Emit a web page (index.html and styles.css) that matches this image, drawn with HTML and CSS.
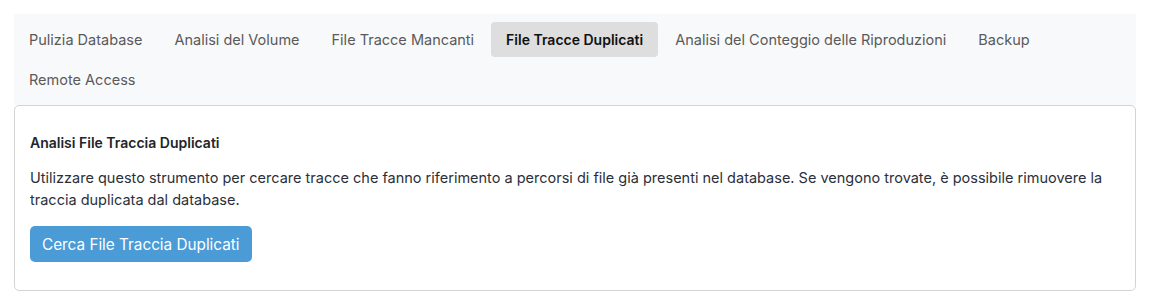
FILE: index.html
```html
<!DOCTYPE html>
<html lang="it">
<head>
    <meta charset="UTF-8">
    <meta name="viewport" content="width=device-width, initial-scale=1.0">
    <title>Strumenti Database</title>
    <link rel="stylesheet" href="styles.css">
</head>
<body>
    <div class="tabs">
        <a class="tab" href="#">Pulizia Database</a>
        <a class="tab" href="#">Analisi del Volume</a>
        <a class="tab" href="#">File Tracce Mancanti</a>
        <a class="tab active" href="#">File Tracce Duplicati</a>
        <a class="tab" href="#">Analisi del Conteggio delle Riproduzioni</a>
        <a class="tab" href="#">Backup</a>
        <a class="tab" href="#">Remote Access</a>
    </div>
    <div class="card">
        <h3 class="card-title">Analisi File Traccia Duplicati</h3>
        <p class="card-text">Utilizzare questo strumento per cercare tracce che fanno riferimento a percorsi di file già presenti nel database. Se vengono trovate, è possibile rimuovere la traccia duplicata dal database.</p>
        <button class="btn">Cerca File Traccia Duplicati</button>
    </div>
</body>
</html>
```

FILE: styles.css
```css
body {
    font-family: Inter, "Noto Sans", sans-serif;
    font-size: 14.5px;
    margin: 14px;
    background: white;
    color: #212529;
}
.tabs {
    background: #f8f9fa;
    display: flex;
    flex-wrap: wrap;
    gap: 5px 2px;
    padding: 8px 0;
}
.tab {
    padding: 7px 15px;
    line-height: 21px;
    color: #5a5a5a;
    text-decoration: none;
    border-radius: 4px;
}
.tab.active {
    background: #dedede;
    color: #111;
    font-size: 14px;
    font-weight: 600;
}
.card {
    border: 1px solid #d3d3d3;
    border-radius: 5px;
    padding: 27px 15px 28px;
}
.card-title {
    font-size: 14px;
    font-weight: 600;
    line-height: 20px;
    margin: 0 0 14px;
}
.card-text {
    line-height: 22px;
    margin: 0 0 15px;
    color: #2b2f3a;
}
.btn {
    font-family: inherit;
    font-size: 15.3px;
    background: #4a9bd6;
    color: white;
    border: none;
    border-radius: 5px;
    height: 36px;
    padding: 0 12px;
    cursor: pointer;
}
```
